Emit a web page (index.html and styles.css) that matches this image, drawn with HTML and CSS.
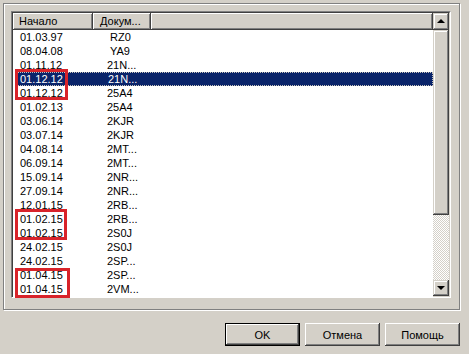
FILE: index.html
```html
<!DOCTYPE html>
<html lang="ru">
<head>
  <meta charset="UTF-8">
  <title>Документы</title>
  <link rel="stylesheet" href="styles.css">
</head>
<body>

<div class="dialog">
  <div class="group">
    <div class="list">
      <div class="main">
        <div class="head">
          <div class="hcell c1">Начало</div>
          <div class="hcell c2">Докум...</div>
          <div class="hcell fill"></div>
        </div>
        <div class="rows">
          <div class="row"><span class="c1">01.03.97</span><span class="c2 lead">RZ0</span></div>
          <div class="row"><span class="c1">08.04.08</span><span class="c2 lead">YA9</span></div>
          <div class="row"><span class="c1">01.11.12</span><span class="c2">21N...</span></div>
          <div class="row sel"><span class="c1">01.12.12</span><span class="c2">21N...</span></div>
          <div class="row"><span class="c1">01.12.12</span><span class="c2">25A4</span></div>
          <div class="row"><span class="c1">01.02.13</span><span class="c2">25A4</span></div>
          <div class="row"><span class="c1">03.06.14</span><span class="c2">2KJR</span></div>
          <div class="row"><span class="c1">03.07.14</span><span class="c2">2KJR</span></div>
          <div class="row"><span class="c1">04.08.14</span><span class="c2">2MT...</span></div>
          <div class="row"><span class="c1">06.09.14</span><span class="c2">2MT...</span></div>
          <div class="row"><span class="c1">15.09.14</span><span class="c2">2NR...</span></div>
          <div class="row"><span class="c1">27.09.14</span><span class="c2">2NR...</span></div>
          <div class="row"><span class="c1">12.01.15</span><span class="c2">2RB...</span></div>
          <div class="row"><span class="c1">01.02.15</span><span class="c2">2RB...</span></div>
          <div class="row"><span class="c1">01.02.15</span><span class="c2">2S0J</span></div>
          <div class="row"><span class="c1">24.02.15</span><span class="c2">2S0J</span></div>
          <div class="row"><span class="c1">24.02.15</span><span class="c2">2SP...</span></div>
          <div class="row"><span class="c1">01.04.15</span><span class="c2">2SP...</span></div>
          <div class="row"><span class="c1">01.04.15</span><span class="c2">2VM...</span></div>

          <!-- red marks drawn over the list -->
          <div class="mark m1"></div>
          <div class="mark m2"></div>
          <div class="mark m3"></div>
        </div>
      </div>
      <div class="vscroll">
        <div class="sbtn"><span class="arrow up"></span></div>
        <div class="thumb"></div>
        <div class="track"></div>
        <div class="sbtn"><span class="arrow down"></span></div>
      </div>
    </div>
  </div>

  <div class="buttons">
    <button class="btn def">OK</button>
    <button class="btn">Отмена</button>
    <button class="btn">Помощь</button>
  </div>
</div>

</body>
</html>
```

FILE: styles.css
```css
* { box-sizing: border-box; }
body { margin: 0; background: #d4d0c8; font-family: "Liberation Sans", Arial, sans-serif; font-size: 11px; color: #000; }
.dialog { width: 469px; height: 354px; padding-top: 3px; }

.group {
  margin: 0 9px 0 3px; height: 307px; padding: 7px 8px 0 7px;
  border: 1px solid #808080; box-shadow: inset 1px 1px 0 #fff, 1px 1px 0 #fff;
}

.list {
  display: flex; height: 287px; background: #fff;
  border: 1px solid; border-color: #808080 #fff #fff #808080;
}
.list > * { border-top: 1px solid #404040; }
.main { flex: 1; display: flex; flex-direction: column; border-left: 1px solid #404040; }

.head { display: flex; height: 17px; }
.hcell {
  background: #d4d0c8; line-height: 17px; white-space: nowrap; overflow: hidden;
  box-shadow: inset -1px -1px #404040, inset 1px 1px #fff, inset -2px -2px #808080;
}
.head .c1 { width: 80px; padding-left: 6px; }
.head .c2 { width: 58px; padding-left: 7px; }
.head .fill { flex: 1; }

.rows { position: relative; flex: 1; }
.row { display: flex; height: 14px; line-height: 14px; white-space: nowrap; }
.row .c1 { width: 80px; padding-left: 7px; }
.row .c2 { padding-left: 14px; }
.row .lead { padding-left: 17px; }
.row.sel { background: #0a246a; color: #fff; margin-left: 2px; border: 1px dotted #c8c4bc; line-height: 12px; }
.row.sel .c1 { width: 78px; padding-left: 4px; }

.mark { position: absolute; left: 2px; border: 3px solid #d8232a; }
.m1 { top: 39px; width: 53px; height: 31px; }
.m2 { top: 179px; width: 52px; height: 31px; }
.m3 { top: 238px; width: 55px; height: 30px; }

.vscroll { width: 16px; display: flex; flex-direction: column; border-right: 1px solid #d4d0c8; border-bottom: 1px solid #d4d0c8; width: 17px; }
.sbtn, .thumb {
  background: #d4d0c8;
  box-shadow: inset -1px -1px #404040, inset 1px 1px #d4d0c8, inset -2px -2px #808080, inset 2px 2px #fff;
}
.sbtn { height: 16px; display: flex; align-items: center; justify-content: center; }
.vscroll .sbtn:first-child { height: 17px; }
.thumb { height: 185px; }
.track { flex: 1; background: repeating-conic-gradient(#fff 0 25%, #d4d0c8 0 50%) 0 0 / 2px 2px; }
.arrow { width: 0; height: 0; border-left: 4px solid transparent; border-right: 4px solid transparent; }
.arrow.up { border-bottom: 4px solid #000; margin-top: -1px; }
.arrow.down { border-top: 4px solid #000; }

.buttons { display: flex; justify-content: flex-end; gap: 5px; padding: 13px 9px 0 0; }
.btn {
  width: 75px; height: 23px; padding: 0; border: 0; background: #d4d0c8;
  font-family: "Liberation Sans", Arial, sans-serif; font-size: 11px; color: #000;
  box-shadow: inset -1px -1px #404040, inset 1px 1px #fff, inset -2px -2px #808080, inset 2px 2px #d4d0c8;
}
.btn.def {
  border: 1px solid #000;
  box-shadow: inset -1px -1px #404040, inset 1px 1px #fff, inset -2px -2px #808080;
}
```
